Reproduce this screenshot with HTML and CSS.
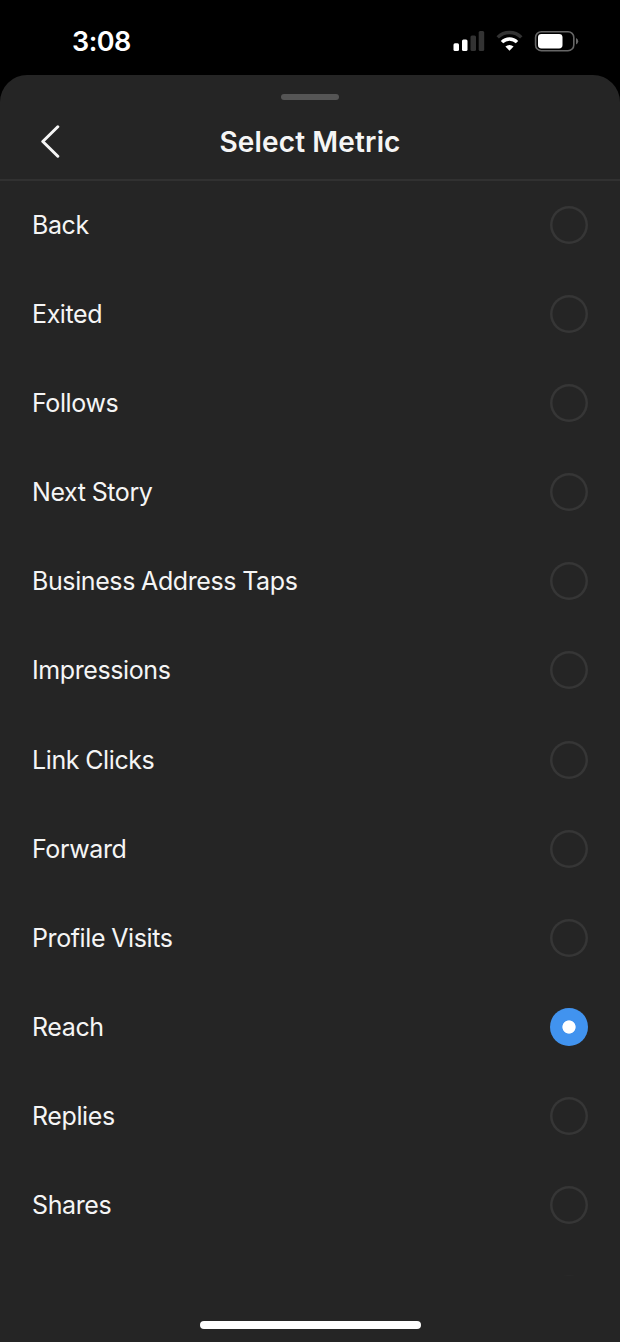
FILE: index.html
```
<!doctype html>
<html lang="en" >
<head>
<meta charset="utf-8" >
<meta name="viewport" content="width=device-width,initial-scale=1" >
<title>Select Metric</title>
<link rel="stylesheet" href="styles.css">
</head>
<body>

	<div class="statusBar" >
		<div class="clock" >3:08</div>

		<svg class="statusIcons" width="126" height="24" viewBox="0 0 126 24" >
			<!-- signal -->
			<g fill="#fff" >
				<rect x="0.5" y="13.2" width="5.5" height="7.8" rx="1.5" />
				<rect x="9" y="9.5" width="5.5" height="11.5" rx="1.5" />
				<rect x="17.5" y="5.5" width="5.5" height="15.5" rx="1.5" fill="#333" />
				<rect x="25.7" y="1" width="5.5" height="20" rx="1.5" fill="#333" />
			</g>

			<!-- wifi -->
			<g fill="none" stroke="#fff" stroke-width="3.4" >
				<path d="M44.7 7.4 A16.6 16.6 0 0 1 68.3 7.4" stroke="#333" />
				<path d="M49 12.1 A10.5 10.5 0 0 1 64 12.1" />
			</g>
			<path d="M56.5 20.8 L52.4 16.5 A6.2 6.2 0 0 1 60.6 16.5 Z" fill="#fff" />

			<!-- battery -->
			<rect x="82.6" y="1.7" width="38.2" height="19" rx="5.8" fill="none" stroke="#666" stroke-width="1.6" />
			<rect x="85" y="4" width="24.5" height="14.4" rx="3.4" fill="#fff" />
			<path d="M123 8 Q125.2 9 125.2 11.2 Q125.2 13.4 123 14.4 Z" fill="#666" />
		</svg>
	</div>

	<div class="sheet" >

		<div class="header" >
			<div class="grabber" ></div>
			<div class="titleRow" >
				<svg class="back" width="20" height="34" viewBox="0 0 20 34" >
					<path d="M17.8 2.8 L2.8 17.5 L17.8 32.2" fill="none" stroke="#f5f5f5" stroke-width="3" stroke-linecap="round" stroke-linejoin="round" />
				</svg>
				<h1>Select Metric</h1>
			</div>
		</div>

		<div class="list" >
			<div class="row" ><span>Back</span><i class="radio" ></i></div>
			<div class="row" ><span>Exited</span><i class="radio" ></i></div>
			<div class="row" ><span>Follows</span><i class="radio" ></i></div>
			<div class="row" ><span>Next Story</span><i class="radio" ></i></div>
			<div class="row" ><span>Business Address Taps</span><i class="radio" ></i></div>
			<div class="row" ><span>Impressions</span><i class="radio" ></i></div>
			<div class="row" ><span>Link Clicks</span><i class="radio" ></i></div>
			<div class="row" ><span>Forward</span><i class="radio" ></i></div>
			<div class="row" ><span>Profile Visits</span><i class="radio" ></i></div>
			<div class="row" ><span>Reach</span><i class="radio selected" ></i></div>
			<div class="row" ><span>Replies</span><i class="radio" ></i></div>
			<div class="row" ><span>Shares</span><i class="radio" ></i></div>
			<div class="row" ><span></span><i class="radio faded" ></i></div>
		</div>

		<div class="homeBar" ></div>

	</div>

</body>
</html>
```
FILE: styles.css
```
* { box-sizing: border-box; }

html, body { height: 1342px; margin: 0; }
body { background-color: #000; color: #f5f5f5; display: flex; flex-direction: column; font: 25px Inter, "Liberation Sans", sans-serif; overflow: hidden; }

.statusBar { align-items: center; display: flex; flex: none; height: 75px; justify-content: space-between; padding: 8px 41px 0 72px; }
.clock { color: #fff; font-size: 27px; font-weight: 600; letter-spacing: -0.5px; }
.statusIcons { display: block; }

.sheet { background-color: #252525; border-radius: 27px 27px 0 0; display: flex; flex: 1; flex-direction: column; }

.header { border-bottom: 2px solid #313131; flex: none; height: 106px; padding-top: 19px; }
.grabber { background-color: #555; border-radius: 4px; height: 6px; margin: 0 auto; width: 58px; }
.titleRow { align-items: center; display: grid; grid-template-columns: 60px 1fr 60px; height: 50px; margin-top: 16px; padding: 0 40px; }
.titleRow h1 { font-size: 28px; font-weight: 600; letter-spacing: 0.15px; margin: 0; padding-top: 2px; text-align: center; white-space: nowrap; }
.back { display: block; }

.list { flex: none; height: 1095px; overflow: hidden; }
.row { align-items: center; display: flex; height: 89.07px; justify-content: space-between; letter-spacing: -0.4px; padding: 0 32px; word-spacing: -0.5px; }
.row:first-child { margin-top: -0.4px; }

.radio { border-radius: 50%; box-shadow: inset 0 0 0 2.5px #363636; height: 38px; width: 38px; }
.radio.selected { background: radial-gradient( circle, #fff 6.2px, #4193ef 7px ); box-shadow: none; }
.radio.faded { box-shadow: inset 0 0 0 2.5px #292929; }

.homeBar { background-color: #fff; border-radius: 4px; height: 8px; margin: 45px auto 0; width: 221px; }
```
